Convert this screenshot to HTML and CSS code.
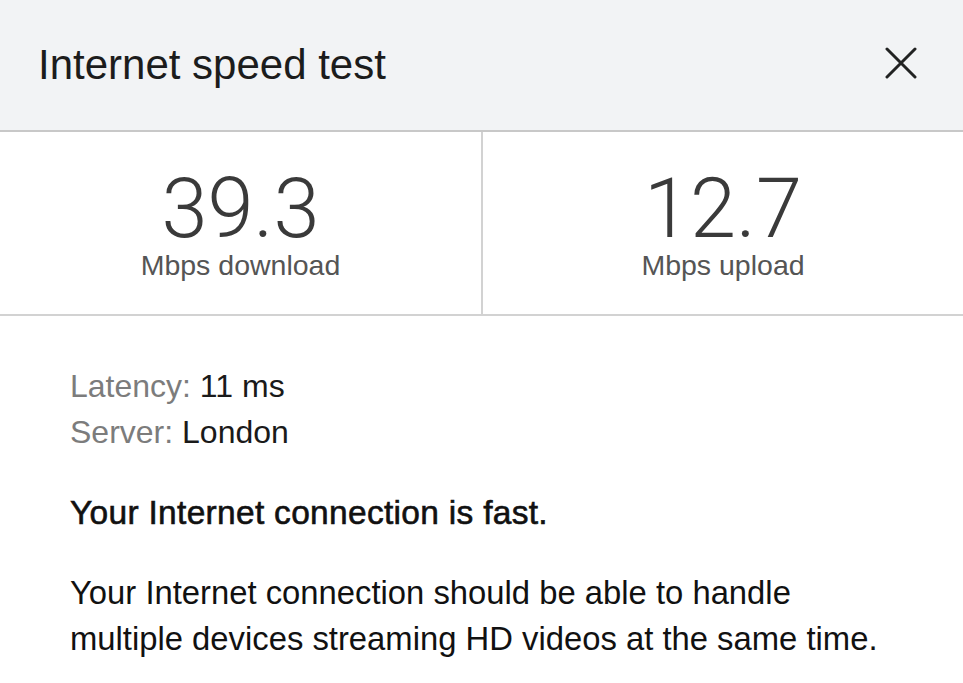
FILE: index.html
```html
<!DOCTYPE html>
<html>
<head>
<meta charset="utf-8">
<link rel="stylesheet" href="styles.css">
</head>
<body>
<div class="dialog">
  <header class="header">
    <h1 class="title">Internet speed test</h1>
    <button class="close" aria-label="Close">
      <svg width="32" height="32" viewBox="0 0 32 32"><path d="M2 2 L30 30 M30 2 L2 30" stroke="#222" stroke-width="3" stroke-linecap="round" fill="none"/></svg>
    </button>
  </header>
  <section class="stats">
    <div class="stat">
      <div class="value">39.3</div>
      <div class="unit">Mbps download</div>
    </div>
    <div class="stat stat-right">
      <div class="value">12.7</div>
      <div class="unit">Mbps upload</div>
    </div>
  </section>
  <section class="details">
    <div class="meta"><span class="label">Latency:</span> 11 ms</div>
    <div class="meta"><span class="label">Server:</span> London</div>
    <p class="verdict">Your Internet connection is fast.</p>
    <p class="desc">Your Internet connection should be able to handle multiple devices streaming HD videos at the same time.</p>
  </section>
</div>
</body>
</html>
```
FILE: styles.css
```css
html, body { margin: 0; padding: 0; background: #fff; }
body { font-family: "Liberation Sans", Arial, sans-serif; width: 963px; height: 683px; overflow: hidden; }
.dialog { display: flex; flex-direction: column; }
.header {
  height: 132px;
  box-sizing: border-box;
  background: #f2f3f5;
  border-bottom: 2px solid #c8c8c8;
  display: flex;
  align-items: center;
  justify-content: space-between;
  padding: 0 46px 0 38px;
}
.title { margin: 0; font-weight: normal; font-size: 42px; color: #1c1c1c; }
.close { background: none; border: none; padding: 0; display: flex; margin-bottom: 4px; }
.stats {
  display: grid;
  grid-template-columns: 481px 1fr;
  height: 184px;
  border-bottom: 2px solid #d2d2d2;
  box-sizing: border-box;
}
.stat { display: flex; flex-direction: column; align-items: center; padding-top: 37px; }
.stat-right { border-left: 2px solid #d2d2d2; }
.value { font-family: "Roboto", "Liberation Sans", sans-serif; font-size: 83px; line-height: 80px; color: #3a3a3a; font-weight: 300; }
.unit { font-size: 28.5px; line-height: 32px; color: #555; }
.details { padding: 47px 70px 0; }
.meta { font-size: 32px; line-height: 46px; color: #1a1a1a; }
.label { color: #7c7c7c; }
.verdict { margin: 35px 0 0; font-size: 33.5px; letter-spacing: 0.3px; line-height: 46px; color: #111; -webkit-text-stroke: 0.6px #111; }
.desc { margin: 34px 0 0; font-size: 32.8px; line-height: 46px; color: #111; }
```
